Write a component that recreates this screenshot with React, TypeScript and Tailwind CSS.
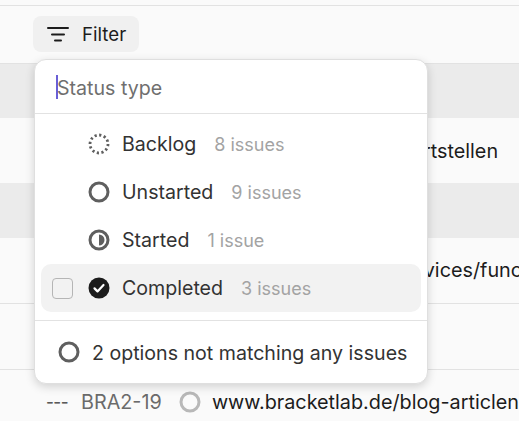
import React from "react";

const BacklogIcon = () => (
  <svg width="22" height="22" viewBox="0 0 22 22" fill="none">
    <circle cx="11" cy="11" r="9" stroke="#5f5f5f" strokeWidth="2.800" strokeDasharray="2.200 2.500" />
  </svg>
);

const UnstartedIcon = ({ color = "#5f5f5f" }: { color?: string }) => (
  <svg width="22" height="22" viewBox="0 0 22 22" fill="none">
    <circle cx="11" cy="11" r="9" stroke={color} strokeWidth="3" />
  </svg>
);

const StartedIcon = () => (
  <svg width="22" height="22" viewBox="0 0 22 22" fill="none">
    <circle cx="11" cy="11" r="9" stroke="#5f5f5f" strokeWidth="3" />
    <path d="M11 5.500a5.500 5.500 0 0 1 0 11z" fill="#5f5f5f" />
  </svg>
);

const CompletedIcon = () => (
  <svg width="22" height="22" viewBox="0 0 22 22" fill="none">
    <circle cx="11" cy="11" r="10.500" fill="#1c1c1c" />
    <path d="M6.500 11.400l3 3 6-6.400" stroke="#fff" strokeWidth="2.200" strokeLinecap="round" strokeLinejoin="round" />
  </svg>
);

const FilterIcon = () => (
  <svg width="22" height="16" viewBox="0 0 22 16" fill="none">
    <path d="M1 2h20M5 8.500h12M8 14.500h6" stroke="#1c1c1c" strokeWidth="2" strokeLinecap="round" />
  </svg>
);

const options = [
  { label: "Backlog", count: "8 issues", icon: <BacklogIcon /> },
  { label: "Unstarted", count: "9 issues", icon: <UnstartedIcon /> },
  { label: "Started", count: "1 issue", icon: <StartedIcon /> },
  { label: "Completed", count: "3 issues", icon: <CompletedIcon />, active: true },
];

const App: React.FC = () => {
  return (
    <div className="relative h-[421px] w-[519px] overflow-hidden bg-[#fafafa] font-['Inter',sans-serif] text-[19.6px] text-[#1c1c1c]">
      <div className="h-[6px] border-b border-[#e2e2e2]" />

      <div className="h-[57px] pl-[33px] pt-[10px]">
        <button className="flex h-[36px] w-[106px] items-center gap-[13px] rounded-[8px] bg-[#f0f0f0] pl-[14px] text-[18.7px]">
          <FilterIcon />
          <span className="mt-[2px]">Filter</span>
        </button>
      </div>

      <div className="h-[55px] border-t border-[#e2e2e2] bg-[#ebebeb]" />
      <div className="flex h-[65px] items-center pl-[423px] pt-[2px] text-[19.8px]">
        <span className="whitespace-nowrap">rtstellen</span>
      </div>
      <div className="h-[55px] bg-[#ebebeb]" />
      <div className="flex h-[66px] items-center overflow-hidden border-b border-[#e2e2e2] pl-[416px] text-[19.8px]">
        <span className="whitespace-nowrap">rvices/func</span>
      </div>
      <div className="h-[66px] border-b border-[#e2e2e2]" />
      <div className="flex h-[51px] items-start pl-[46px] pt-[20px] text-[19.8px] leading-[24px]">
        <span className="w-[35px] text-[17px] font-medium tracking-[-0.5px] text-[#5a5a5a]">---</span>
        <span className="w-[98px] text-[#6b6b6b]">BRA2-19</span>
        <span className="mr-[11px] mt-[1px] shrink-0">
          <UnstartedIcon color="#b8b8b8" />
        </span>
        <span className="whitespace-nowrap">www.bracketlab.de/blog-articlen</span>
      </div>

      <div className="absolute left-[34px] top-[59px] w-[394px] rounded-[12px] border border-[#dfdfdf] bg-white shadow-[0_3px_10px_rgba(0,0,0,0.16)]">
        <div className="flex h-[54px] items-center border-b border-[#e2e2e2] pl-[21px] text-[#6f6f6f]">
          <span className="h-[24px] w-[2px] bg-[#6a5fd6]" />
          <span className="-ml-[1px] pt-[4px]">Status type</span>
        </div>
        <div className="flex flex-col px-[6px] pt-[6px]">
          {options.map((option) => (
            <div
              key={option.label}
              className={
                option.active
                  ? "flex h-[48px] items-center rounded-[10px] bg-[#f2f2f2]"
                  : "flex h-[48px] items-center rounded-[10px]"
              }
            >
              <span className="flex w-[47px] justify-end">
                {option.active && (
                  <span className="mr-[15px] h-[21px] w-[21px] rounded-[4px] border border-[#b5b5b5]" />
                )}
              </span>
              {option.icon}
              <span className="ml-[12px] flex items-baseline gap-[18px] pt-[2px]">
                <span className="text-[#333333]">{option.label}</span>
                <span className="text-[18px] text-[#a3a3a3]">{option.count}</span>
              </span>
            </div>
          ))}
        </div>
        <div className="mt-[8px] flex h-[63px] items-center border-t border-[#e2e2e2] pl-[23px] text-[#333333]">
          <UnstartedIcon />
          <span className="ml-[12px] whitespace-nowrap pt-[4px]">2 options not matching any issues</span>
        </div>
      </div>
    </div>
  );
};

export default App;
